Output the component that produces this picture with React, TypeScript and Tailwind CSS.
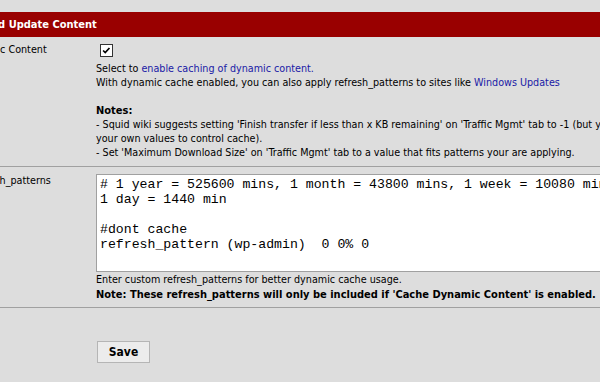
const CheckBox = () => (
  <span className="inline-flex w-[13px] h-[13px] items-center justify-center bg-white border border-[#333333]">
    <svg viewBox="0 0 13 13" className="w-[11px] h-[11px]">
      <path d="M2.5 6.5 L5 9 L10 3.5" fill="none" stroke="#000" strokeWidth="2" />
    </svg>
  </span>
);

const patterns = `# 1 year = 525600 mins, 1 month = 43800 mins, 1 week = 10080 mins
1 day = 1440 min

#dont cache
refresh_pattern (wp-admin)  0 0% 0`;

export default function App() {
  return (
    <div className="w-[600px] h-[382px] overflow-hidden bg-[#dddddd] text-black text-[10.7px] font-['DejaVu_Sans_Condensed','DejaVu_Sans',sans-serif]">
      <div className="-ml-[76px] w-[820px] pt-[12px]">
        <div className="h-[25px] bg-[#990000] text-white font-bold text-[11px] leading-[25px] pl-[9px] whitespace-nowrap">
          Dynamic and Update Content
        </div>

        <div className="flex border-b border-[#a0a0a0]">
          <div className="w-[172px] shrink-0 pl-[6px] pt-[6px] leading-[14px] whitespace-nowrap">
            Cache Dynamic Content
          </div>
          <div className="flex-1 pt-[7px] pb-[6px] leading-[14px] whitespace-nowrap">
            <div className="h-[18px] pl-[4px]">
              <CheckBox />
            </div>
            <div>
              Select to <span className="text-[#1a1aa6]">enable caching of dynamic content.</span>
              <br />
              With dynamic cache enabled, you can also apply refresh_patterns to sites like{" "}
              <span className="text-[#1a1aa6]">Windows Updates</span>
              <br />
              <br />
              <b className="text-[11px]">Notes:</b>
              <br />
              - Squid wiki suggests setting 'Finish transfer if less than x KB remaining' on 'Traffic Mgmt' tab to -1 (but you can set
              <br />
              your own values to control cache).
              <br />
              - Set 'Maximum Download Size' on 'Traffic Mgmt' tab to a value that fits patterns your are applying.
            </div>
          </div>
        </div>

        <div className="flex border-b border-[#a0a0a0]">
          <div className="w-[172px] shrink-0 pl-[8px] pt-[7px] leading-[14px] whitespace-nowrap">
            Custom refresh_patterns
          </div>
          <div className="flex-1 pt-[7px] pb-[5px] whitespace-nowrap">
            <textarea
              readOnly
              defaultValue={patterns}
              wrap="off"
              className="block w-[640px] h-[98px] resize-none overflow-hidden bg-white border border-[#a0a0a0] px-[3px] pt-[2px] text-[13.2px] leading-[15px] font-['Liberation_Mono','Courier_New',monospace] text-black outline-none"
            />
            <div className="leading-[15px]">
              Enter custom refresh_patterns for better dynamic cache usage.
              <br />
              <b className="text-[11px]">Note: These refresh_patterns will only be included if 'Cache Dynamic Content' is enabled.</b>
            </div>
          </div>
        </div>

        <div className="pl-[173px] pt-[33px]">
          <button className="w-[53px] h-[22px] bg-[#ececec] border border-[#b5b5b5] font-bold text-[12px]">
            Save
          </button>
        </div>
      </div>
    </div>
  );
}
